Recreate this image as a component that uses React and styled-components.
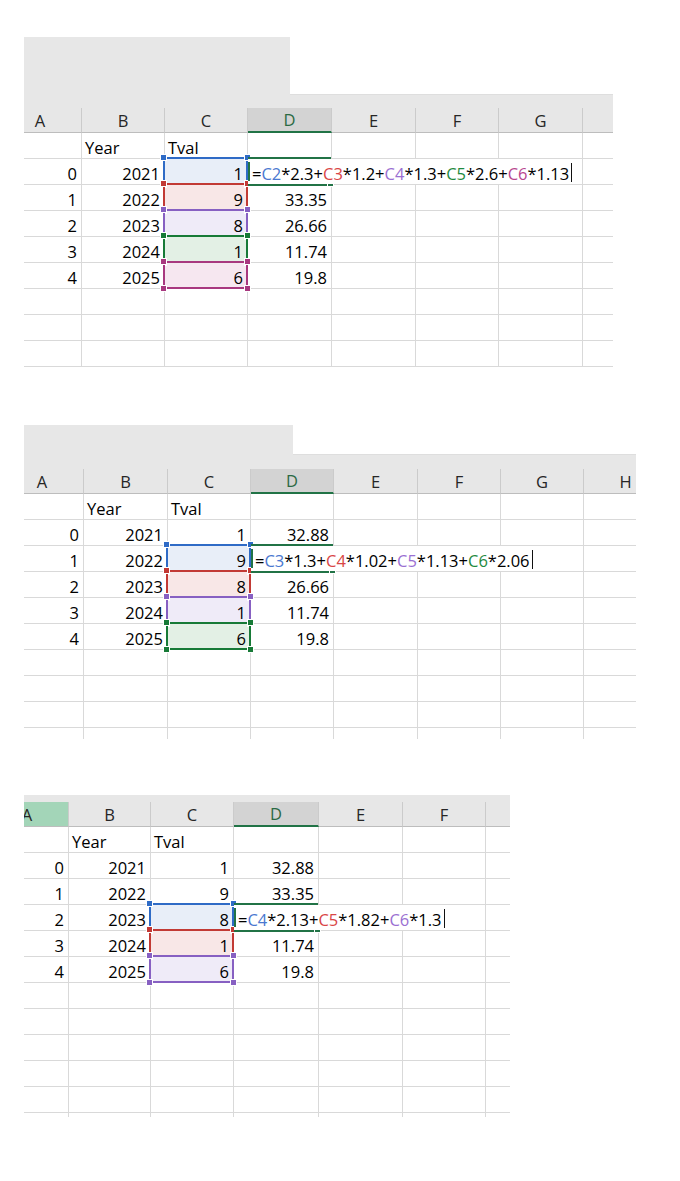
import { createGlobalStyle, styled } from 'styled-components';

const GlobalStyle = createGlobalStyle`
  body {
    margin: 0;
    background: #ffffff;
    font-family: 'Open Sans', 'Liberation Sans', sans-serif;
  }
`;

const ROW_H = 26;
const HEAD_H = 25;

const REF = {
  blue: { line: '#2f6bc6', fill: '#e8eef8', text: '#4a78d0' },
  red: { line: '#c23a35', fill: '#f8e7e7', text: '#d94646' },
  purple: { line: '#8760c2', fill: '#efebf8', text: '#9a70d2' },
  green: { line: '#177a37', fill: '#e3f0e5', text: '#1f8a40' },
  magenta: { line: '#a8387f', fill: '#f6e7f0', text: '#b8468f' },
};

const base = [
  ['', 'Year', 'Tval', ''],
  ['0', '2021', '1', ''],
  ['1', '2022', '9', ''],
  ['2', '2023', '8', ''],
  ['3', '2024', '1', ''],
  ['4', '2025', '6', ''],
];

function withD(values) {
  return base.map((r, i) => (i === 0 ? r : [r[0], r[1], r[2], values[i - 1]]));
}

const sheets = [
  {
    mt: 37,
    width: 589,
    offset: 25,
    grayTop: 71,
    whiteBox: { w: 323, h: 58 },
    cols: [83, 83, 83, 84, 84, 83, 84, 84],
    letters: 'ABCDEFG',
    rows: [...withD(['', '33.35', '26.66', '11.74', '19.8']), [], [], []],
    tail: 0,
    active: {
      row: 1,
      formula: [
        ['='], ['C2', 'blue'], ['*2.3+'], ['C3', 'red'], ['*1.2+'], ['C4', 'purple'],
        ['*1.3+'], ['C5', 'green'], ['*2.6+'], ['C6', 'magenta'], ['*1.13'],
      ],
    },
    ranges: [[1, 'blue'], [2, 'red'], [3, 'purple'], [4, 'green'], [5, 'magenta']],
  },
  {
    mt: 58,
    width: 612,
    offset: 23,
    grayTop: 44,
    whiteBox: { w: 343, h: 30 },
    cols: [83, 84, 83, 83, 84, 83, 83, 84],
    letters: 'ABCDEFGH',
    rows: [...withD(['32.88', '', '26.66', '11.74', '19.8']), [], [], []],
    tail: 11,
    active: {
      row: 2,
      formula: [
        ['='], ['C3', 'blue'], ['*1.3+'], ['C4', 'red'], ['*1.02+'], ['C5', 'purple'],
        ['*1.13+'], ['C6', 'green'], ['*2.06'],
      ],
    },
    ranges: [[2, 'blue'], [3, 'red'], [4, 'purple'], [5, 'green']],
  },
  {
    mt: 56,
    width: 486,
    offset: 38,
    grayTop: 7,
    hotA: true,
    cols: [83, 82, 83, 85, 84, 83, 84],
    letters: 'ABCDEF',
    rows: [...withD(['32.88', '33.35', '', '11.74', '19.8']), [], [], [], [], []],
    tail: 4,
    active: {
      row: 3,
      formula: [['='], ['C4', 'blue'], ['*2.13+'], ['C5', 'red'], ['*1.82+'], ['C6', 'purple'], ['*1.3']],
    },
    ranges: [[3, 'blue'], [4, 'red'], [5, 'purple']],
  },
];

const Page = styled.div`
  display: flex;
  flex-direction: column;
  padding-left: 24px;
`;

const Sheet = styled.div`
  margin-top: ${(p) => p.$mt}px;
  width: ${(p) => p.$w}px;
  height: ${(p) => p.$h}px;
  overflow: hidden;
  display: flex;
  flex-direction: column;
`;

const TopBar = styled.div`
  flex-shrink: 0;
  height: ${(p) => p.$h}px;
  background: #e7e7e7;
  display: flex;
  justify-content: flex-end;
  align-items: flex-start;
`;

const WhiteBox = styled.div`
  width: ${(p) => p.$w}px;
  height: ${(p) => p.$h}px;
  background: #ffffff;
  border-bottom: 1px solid #dedede;
  box-sizing: border-box;
`;

const Grid = styled.div`
  position: relative;
  margin-left: -${(p) => p.$offset}px;
  color: #000000;
  font-size: 16.5px;
`;

const Row = styled.div`
  display: flex;
`;

const HeadCell = styled.div`
  flex-shrink: 0;
  box-sizing: border-box;
  width: ${(p) => p.$w}px;
  height: ${HEAD_H}px;
  display: flex;
  align-items: flex-end;
  justify-content: center;
  line-height: 20px;
  padding-bottom: 1px;
  color: ${(p) => (p.$active ? '#2b6a44' : '#262626')};
  background: ${(p) => (p.$active ? '#d3d3d3' : p.$hot ? '#a3d5b8' : '#e7e7e7')};
  border-right: 1px solid #cbcbcb;
  border-bottom: ${(p) => (p.$active ? '2px solid #217346' : '1px solid #bdbdbd')};
`;

const Cell = styled.div`
  flex-shrink: 0;
  box-sizing: border-box;
  width: ${(p) => p.$w}px;
  height: ${ROW_H}px;
  display: flex;
  align-items: flex-end;
  justify-content: ${(p) => (p.$right ? 'flex-end' : 'flex-start')};
  padding: 0 4px 0 3px;
  line-height: 20px;
  white-space: nowrap;
  background: ${(p) => p.$bg || '#ffffff'};
  border-right: 1px solid #d9d9d9;
  border-bottom: 1px solid #d9d9d9;
`;

const RangeBox = styled.div`
  position: absolute;
  box-sizing: border-box;
  border: 2px solid ${(p) => p.$color};
`;

const Handle = styled.span`
  position: absolute;
  width: 5px;
  height: 5px;
  background: ${(p) => p.$color};
  border: 1px solid #ffffff;
  ${(p) => (p.$top ? 'top: -5px;' : 'bottom: -5px;')}
  ${(p) => (p.$left ? 'left: -5px;' : 'right: -5px;')}
`;

const Editor = styled.div`
  position: absolute;
  padding: 2px 0;
`;

const EditLine = styled.span`
  position: absolute;
  left: 0;
  width: ${(p) => p.$w}px;
  height: 2px;
  background: #217346;
  ${(p) => (p.$bottom ? 'top: 27px;' : 'top: 0;')}
`;

const EditHandle = styled.span`
  position: absolute;
  left: ${(p) => p.$x}px;
  top: 24px;
  width: 5px;
  height: 4px;
  background: #217346;
  border: 1px solid #ffffff;
`;

const EditText = styled.div`
  position: relative;
  height: 25px;
  box-sizing: border-box;
  background: #ffffff;
  display: flex;
  align-items: flex-end;
  padding: 0 3px 0 4px;
  line-height: 20px;
  white-space: nowrap;

  &::before {
    content: '';
    position: absolute;
    left: 0;
    top: 3px;
    width: 2px;
    height: 19px;
    background: #217346;
  }
`;

const Ref = styled.span`
  color: ${(p) => (p.$c ? REF[p.$c].text : '#000000')};
`;

const Cursor = styled.span`
  width: 1px;
  height: 19px;
  margin-left: 2px;
  margin-bottom: 2px;
  background: #111111;
`;

const isNum = (v) => v !== '' && !isNaN(Number(v));

function Spreadsheet({ sheet }) {
  const { cols, rows, ranges, active } = sheet;
  const colX = cols.map((_, i) => cols.slice(0, i).reduce((a, b) => a + b, 0));
  const rowY = (k) => HEAD_H + ROW_H * k;
  const height = sheet.grayTop + HEAD_H + ROW_H * rows.length + sheet.tail;
  const allRows = sheet.tail ? [...rows, []] : rows;
  const tintFor = (k) => {
    const r = ranges.find(([row]) => row === k);
    return r ? REF[r[1]].fill : null;
  };

  return (
    <Sheet $mt={sheet.mt} $w={sheet.width} $h={height}>
      <TopBar $h={sheet.grayTop}>
        {sheet.whiteBox && <WhiteBox $w={sheet.whiteBox.w} $h={sheet.whiteBox.h} />}
      </TopBar>
      <Grid $offset={sheet.offset}>
        <Row>
          {cols.map((w, i) => (
            <HeadCell key={i} $w={w} $active={i === 3} $hot={sheet.hotA && i === 0}>
              {sheet.letters[i] || ''}
            </HeadCell>
          ))}
        </Row>
        {allRows.map((r, k) => (
          <Row key={k}>
            {cols.map((w, i) => {
              const v = r[i] || '';
              const right = i === 0 || isNum(v);
              return (
                <Cell key={i} $w={w} $right={right} $bg={i === 2 ? tintFor(k) : null}>
                  {v}
                </Cell>
              );
            })}
          </Row>
        ))}
        {ranges.map(([k, c]) => (
          <RangeBox
            key={k}
            $color={REF[c].line}
            style={{ left: colX[2] - 2, top: rowY(k) - 2, width: cols[2] + 2, height: ROW_H + 2 }}
          >
            <Handle $color={REF[c].line} $top $left />
            <Handle $color={REF[c].line} $top />
            <Handle $color={REF[c].line} $left />
            <Handle $color={REF[c].line} />
          </RangeBox>
        ))}
        <Editor style={{ left: colX[3], top: rowY(active.row) - 2 }}>
          <EditLine $w={cols[3] - 1} />
          <EditLine $w={cols[3] - 1} $bottom />
          <EditHandle $x={cols[3] - 5} />
          <EditText>
            {active.formula.map(([t, c], i) => (
              <Ref key={i} $c={c}>
                {t}
              </Ref>
            ))}
            <Cursor />
          </EditText>
        </Editor>
      </Grid>
    </Sheet>
  );
}

export default function App() {
  return (
    <>
      <GlobalStyle />
      <Page>
        {sheets.map((s, i) => (
          <Spreadsheet key={i} sheet={s} />
        ))}
      </Page>
    </>
  );
}
